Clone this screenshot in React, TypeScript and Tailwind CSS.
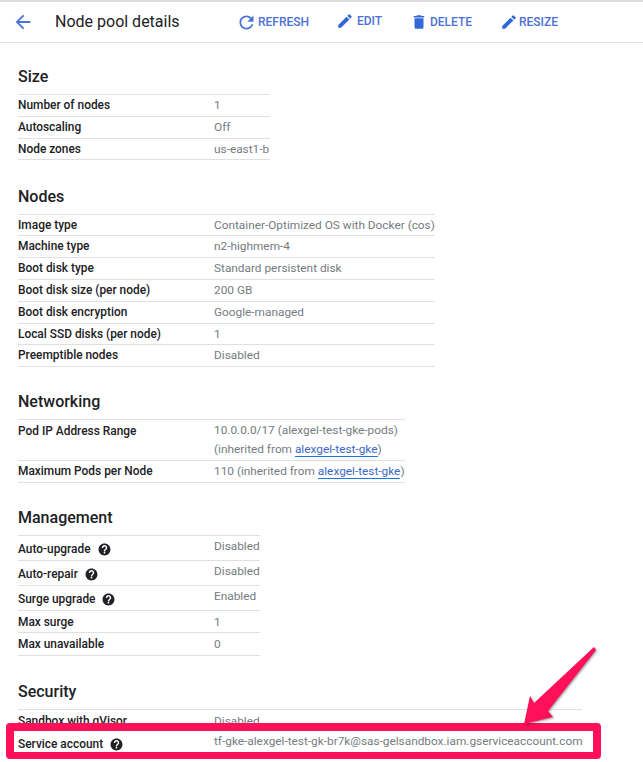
import type { ReactNode } from 'react';

interface Row {
  label: string;
  value: ReactNode;
  help?: boolean;
  low?: boolean;
  height: string;
}

interface Section {
  title: string;
  width: string;
  spacing: string;
  rows: Row[];
}

function Inherited() {
  return (
    <a className="border-b border-[#1a73e8] text-[#3b68c9]" href="#">
      alexgel-test-gke
    </a>
  );
}

const SECTIONS: Section[] = [
  {
    title: 'Size',
    width: 'w-[252px]',
    spacing: 'mb-[26px]',
    rows: [
      { label: 'Number of nodes', value: '1', height: 'h-[22px]' },
      { label: 'Autoscaling', value: 'Off', height: 'h-[22px]' },
      { label: 'Node zones', value: 'us-east1-b', height: 'h-[21px]' },
    ],
  },
  {
    title: 'Nodes',
    width: 'w-[417px]',
    spacing: 'mb-[24px]',
    rows: [
      { label: 'Image type', value: 'Container-Optimized OS with Docker (cos)', height: 'h-[21px]' },
      { label: 'Machine type', value: 'n2-highmem-4', height: 'h-[22px]' },
      { label: 'Boot disk type', value: 'Standard persistent disk', height: 'h-[22px]' },
      { label: 'Boot disk size (per node)', value: '200 GB', height: 'h-[22px]' },
      { label: 'Boot disk encryption', value: 'Google-managed', height: 'h-[22px]' },
      { label: 'Local SSD disks (per node)', value: '1', height: 'h-[21px]' },
      { label: 'Preemptible nodes', value: 'Disabled', height: 'h-[22px]' },
    ],
  },
  {
    title: 'Networking',
    width: 'w-[387px]',
    spacing: 'mb-[24px]',
    rows: [
      {
        label: 'Pod IP Address Range',
        value: (
          <span className="block leading-[19px]">
            10.0.0.0/17 (alexgel-test-gke-pods)
            <br />
            (inherited from <Inherited />)
          </span>
        ),
        low: true,
        height: 'h-[41px]',
      },
      {
        label: 'Maximum Pods per Node',
        value: (
          <>
            110 (inherited from <Inherited />)
          </>
        ),
        height: 'h-[22px]',
      },
    ],
  },
  {
    title: 'Management',
    width: 'w-[242px]',
    spacing: 'mb-[25px]',
    rows: [
      { label: 'Auto-upgrade', value: 'Disabled', help: true, height: 'h-[25px]' },
      { label: 'Auto-repair', value: 'Disabled', help: true, height: 'h-[25px]' },
      { label: 'Surge upgrade', value: 'Enabled', help: true, height: 'h-[25px]' },
      { label: 'Max surge', value: '1', low: true, height: 'h-[22px]' },
      { label: 'Max unavailable', value: '0', low: true, height: 'h-[23px]' },
    ],
  },
  {
    title: 'Security',
    width: 'w-[564px]',
    spacing: 'mb-[26px]',
    rows: [
      { label: 'Sandbox with gVisor', value: 'Disabled', low: true, height: 'h-[21px]' },
      {
        label: 'Service account',
        value: 'tf-gke-alexgel-test-gk-br7k@sas-gelsandbox.iam.gserviceaccount.com',
        help: true,
        height: 'h-[25px]',
      },
    ],
  },
];

function HelpIcon() {
  return (
    <svg className="ml-[7px] h-[13px] w-[13px] shrink-0" viewBox="0 0 24 24" aria-hidden="true">
      <path
        fill="#202124"
        d="M12 1C5.900 1 1 5.900 1 12s4.900 11 11 11 11-4.900 11-11S18.100 1 12 1zm1.300 18.400h-2.700v-2.700h2.700v2.700zm2.600-7.900-1.100 1.100c-.9.9-1.400 1.600-1.400 3h-2.700v-.6c0-1.100.5-2.200 1.400-3l1.500-1.600c.5-.4.7-1 .7-1.700 0-1.300-1.100-2.300-2.300-2.300S9.600 7.700 9.600 9H7c0-2.800 2.200-5.100 5-5.100s5 2.300 5 5.100c0 1-.4 1.900-1.100 2.500z"
      />
    </svg>
  );
}

function ActionButton({ icon, label, className }: { icon: ReactNode; label: string; className: string }) {
  return (
    <button className={`flex items-center text-[12px] font-medium text-[#4a72d6] ${className}`}>
      {icon}
      {label}
    </button>
  );
}

const refresh = (
  <svg className="h-[21px] w-[21px]" viewBox="0 0 24 24" fill="#4a72d6" aria-hidden="true">
    <path d="M17.650 6.350C16.200 4.900 14.210 4 12 4c-4.420 0-7.990 3.580-7.990 8s3.570 8 7.990 8c3.730 0 6.840-2.550 7.730-6h-2.080c-.82 2.330-3.040 4-5.650 4-3.310 0-6-2.690-6-6s2.690-6 6-6c1.660 0 3.140.69 4.220 1.780L13 11h7V4l-2.350 2.350z" />
  </svg>
);

const pencil = (
  <svg className="h-[18px] w-[18px]" viewBox="0 0 24 24" fill="#3367d6" aria-hidden="true">
    <path d="M3 17.250V21h3.750L17.810 9.940l-3.750-3.750L3 17.250zM20.710 7.040a1 1 0 0 0 0-1.410l-2.340-2.340a1 1 0 0 0-1.410 0l-1.830 1.830 3.750 3.750 1.830-1.830z" />
  </svg>
);

const trash = (
  <svg className="h-[18px] w-[18px]" viewBox="0 0 24 24" fill="#3367d6" aria-hidden="true">
    <path d="M6 19c0 1.100.9 2 2 2h8c1.100 0 2-.9 2-2V7H6v12zM19 4h-3.500l-1-1h-5l-1 1H5v2h14V4z" />
  </svg>
);

function labelInset(row: Row) {
  if (row.help) return 'pt-[5px]';
  return row.low ? 'pt-[3px]' : 'pt-[2px]';
}

function DetailsSection({ section }: { section: Section }) {
  return (
    <section className={section.spacing}>
      <h2 className="h-[28px] text-[16px] leading-[22px] font-medium text-[#202124]">{section.title}</h2>
      <div className={`border-t border-[#e0e0e0] ${section.width}`}>
        {section.rows.map((row) => (
          <div key={row.label} className={`flex border-b border-[#e0e0e0] ${row.height}`}>
            <div
              className={`flex w-[196px] shrink-0 items-center self-start text-[11.9px] leading-[16px] font-medium text-[#202124] ${labelInset(row)}`}
            >
              {row.label}
              {row.help && <HelpIcon />}
            </div>
            <div
              className={`whitespace-nowrap text-[11.83px] leading-[20px] text-[#757b80] ${row.low ? 'pt-[1px]' : ''}`}
            >
              {row.value}
            </div>
          </div>
        ))}
      </div>
    </section>
  );
}

export default function App() {
  return (
    <div className="relative h-[762px] w-[643px] overflow-hidden bg-white font-['Roboto',sans-serif]">
      <div className="h-[2px] bg-[#dcdcdc]" />
      <header className="flex h-[41px] items-center border-b border-[#e3e3e3]">
        <svg className="ml-[12px] h-[22px] w-[22px]" viewBox="0 0 24 24" fill="#4a72d6" aria-hidden="true">
          <path d="M20 11H7.830l5.590-5.590L12 4l-8 8 8 8 1.410-1.410L7.830 13H20v-2z" />
        </svg>
        <h1 className="ml-[21px] w-[181px] text-[16px] text-[#202124]">Node pool details</h1>
        <ActionButton icon={refresh} label="REFRESH" className="w-[100px] gap-px" />
        <ActionButton icon={pencil} label="EDIT" className="mb-[3px] w-[74px] gap-[3px]" />
        <ActionButton icon={trash} label="DELETE" className="w-[90px] gap-[2px]" />
        <ActionButton icon={pencil} label="RESIZE" className="gap-px" />
      </header>
      <main className="px-[18px] pt-[23px]">
        {SECTIONS.map((section) => (
          <DetailsSection key={section.title} section={section} />
        ))}
      </main>

      {/* Red annotation drawn over the screenshot */}
      <div className="absolute left-[6px] top-[723px] h-[36px] w-[595px] rounded-[4px] border-x-[8px] border-t-[8px] border-b-[7px] border-[#ff1058]" />
      <svg
        className="absolute left-[520px] top-[640px] h-[90px] w-[85px] drop-shadow-[1px_1px_1px_rgba(0,0,0,0.4)]"
        viewBox="0 0 85 90"
        aria-hidden="true"
      >
        <path fill="#ff1058" d="M74 7 L76 10 L28 71 L33 77 L4 84 L10 56 L14 63 Z" />
      </svg>
    </div>
  );
}
